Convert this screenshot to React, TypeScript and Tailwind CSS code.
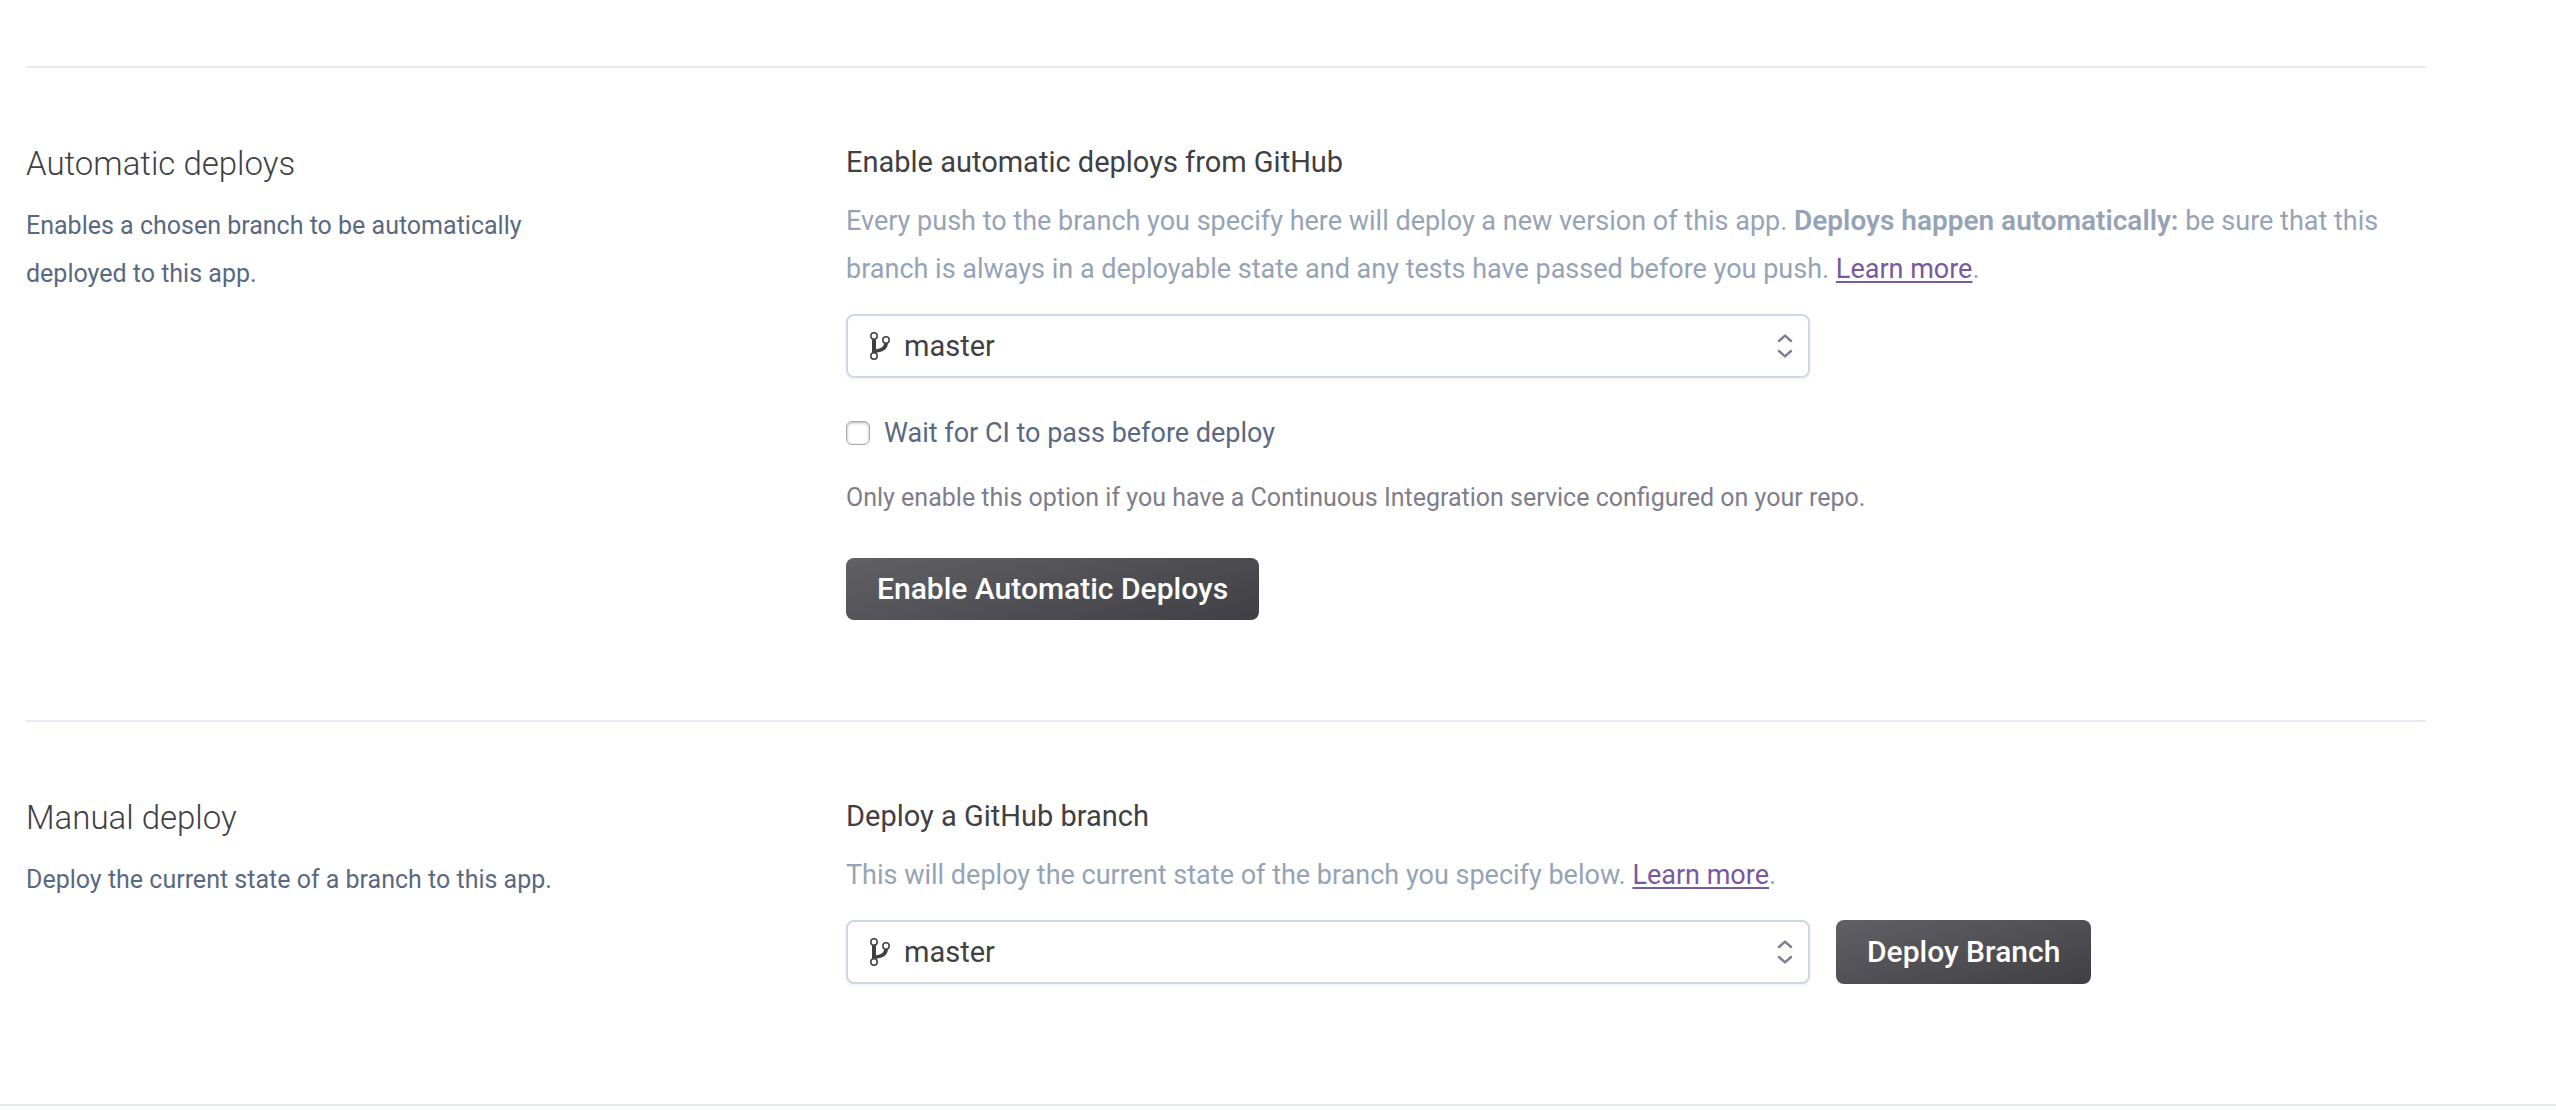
import type { ReactNode } from "react";

function BranchIcon() {
  return (
    <svg
      aria-hidden="true"
      viewBox="0 0 20 28"
      className="pointer-events-none absolute left-6 top-[18px] h-7 w-5 text-[#3f3f44]"
      fill="none"
      stroke="currentColor"
    >
      <circle cx="4" cy="4" r="3.2" strokeWidth="1.5" />
      <circle cx="16" cy="8" r="3.2" strokeWidth="1.5" />
      <circle cx="4" cy="24" r="3.2" strokeWidth="1.5" />
      <path
        d="M2 7.2C2.6 7.6 5.4 7.6 6 7.2V17.2C9.8 16.8 13.6 15.6 14.2 11.2C15.2 11.7 17 11.7 18 11.1C17.6 17.4 13.4 19.8 7.4 20.4C6.6 20.5 6.2 20.7 5.8 21C4.8 20.4 3.2 20.4 2 21Z"
        fill="currentColor"
        stroke="none"
      />
    </svg>
  );
}

function SortIcon() {
  return (
    <svg
      aria-hidden="true"
      viewBox="0 0 16 26"
      className="pointer-events-none absolute right-[17px] top-[19px] h-[26px] w-4"
      fill="none"
      stroke="#7f7b90"
      strokeWidth="2.4"
      strokeLinecap="round"
      strokeLinejoin="round"
    >
      <path d="M2 8L8 2.6L14 8M2 18L8 23.4L14 18" />
    </svg>
  );
}

function BranchSelect({ label }: { label: string }) {
  return (
    <div className="relative w-[964px] max-w-full">
      <select
        aria-label={label}
        className="block h-16 w-full appearance-none rounded-lg border-2 border-[#cdd7e6] bg-white pl-14 pr-12 pt-0.5 text-[29px] text-[#3f3f44] shadow-[0_2px_4px_rgba(0,0,0,0.05)]"
      >
        <option>master</option>
      </select>
      <BranchIcon />
      <SortIcon />
    </div>
  );
}

function PrimaryButton({ children, className }: { children: ReactNode; className: string }) {
  return (
    <button
      type="button"
      className={
        "shrink-0 rounded-lg bg-[linear-gradient(165deg,#606065,#3f3f44)] px-[31px] pb-0.5 text-[30px] font-medium text-white " +
        className
      }
    >
      {children}
    </button>
  );
}

function LearnMore() {
  return (
    <a href="#learn-more" className="text-[#79589f] underline decoration-2 underline-offset-3">
      Learn more
    </a>
  );
}

interface SectionProps {
  title: string;
  description: string;
  heading: string;
  className: string;
  children: ReactNode;
}

function Section({ title, description, heading, className, children }: SectionProps) {
  return (
    <section
      className={
        "ml-[26px] mr-[130px] grid grid-cols-3 gap-[60px] border-t-2 border-[#e6eaf4] pt-[72px] " + className
      }
    >
      <div>
        <h2 className="text-[33px] font-light leading-[48px] text-[#3f3f44]">{title}</h2>
        <p className="mt-[14px] max-w-[560px] text-[25px] leading-[48px] text-[#596981]">{description}</p>
      </div>
      <div className="col-span-2">
        <h3 className="text-[29px] leading-[44px] text-[#3f3f44]">{heading}</h3>
        {children}
      </div>
    </section>
  );
}

export default function App() {
  return (
    <main className="border-b-2 border-[#e6ebf2] bg-white pt-[66px] font-['Roboto',sans-serif]">
      <Section
        title="Automatic deploys"
        description="Enables a chosen branch to be automatically deployed to this app."
        heading="Enable automatic deploys from GitHub"
        className="pb-[100px]"
      >
        <p className="mb-[21px] mt-[13px] text-[27px] leading-[48px] text-[#96a3b6]">
          Every push to the branch you specify here will deploy a new version of this app.{" "}
          <strong className="text-[28px] font-semibold leading-none">Deploys happen automatically:</strong> be sure that
          this branch is always in a deployable state and any tests have passed before you push. <LearnMore />.
        </p>
        <BranchSelect label="Branch to deploy automatically" />
        <label className="mt-[35px] flex w-fit items-center gap-[14px] text-[27px] leading-10 text-[#596981]">
          <input
            type="checkbox"
            className="size-6 appearance-none rounded-md border border-[#a8a8a8] bg-white shadow-[inset_0_1px_3px_rgba(0,0,0,0.3)] checked:bg-[#79589f]"
          />
          Wait for CI to pass before deploy
        </label>
        <p className="mt-[25px] text-[25px] leading-10 text-[#7f7d8a]">
          Only enable this option if you have a Continuous Integration service configured on your repo.
        </p>
        <PrimaryButton className="mt-10 h-[62px]">Enable Automatic Deploys</PrimaryButton>
      </Section>
      <Section
        title="Manual deploy"
        description="Deploy the current state of a branch to this app."
        heading="Deploy a GitHub branch"
        className="pb-[120px]"
      >
        <p className="mb-[21px] mt-[13px] text-[27px] leading-[48px] text-[#96a3b6]">
          This will deploy the current state of the branch you specify below. <LearnMore />.
        </p>
        <div className="flex gap-[26px]">
          <BranchSelect label="Branch to deploy" />
          <PrimaryButton className="h-16">Deploy Branch</PrimaryButton>
        </div>
      </Section>
    </main>
  );
}
